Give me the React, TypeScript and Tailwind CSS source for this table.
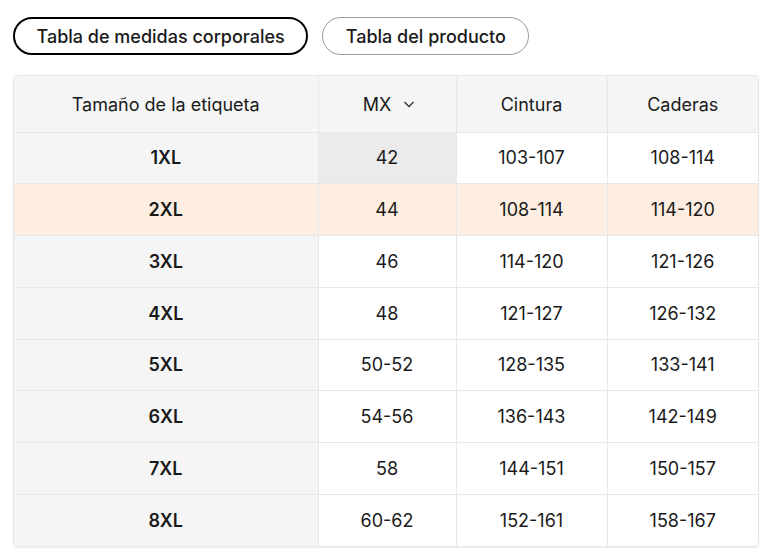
const rows = [
  { label: "1XL", mx: "42", waist: "103-107", hips: "108-114" },
  { label: "2XL", mx: "44", waist: "108-114", hips: "114-120" },
  { label: "3XL", mx: "46", waist: "114-120", hips: "121-126" },
  { label: "4XL", mx: "48", waist: "121-127", hips: "126-132" },
  { label: "5XL", mx: "50-52", waist: "128-135", hips: "133-141" },
  { label: "6XL", mx: "54-56", waist: "136-143", hips: "142-149" },
  { label: "7XL", mx: "58", waist: "144-151", hips: "150-157" },
  { label: "8XL", mx: "60-62", waist: "152-161", hips: "158-167" },
];

export default function App() {
  return (
    <div className="min-h-[558px] bg-white px-[13px] pt-[17px] font-['Inter',sans-serif] text-[18px] text-[#1a1a1a]">
      <div className="flex items-center gap-[14px]">
        <button
          type="button"
          className="h-[38px] rounded-full border-2 border-black px-[21.5px] font-medium"
        >
          Tabla de medidas corporales
        </button>
        <button
          type="button"
          className="h-[38px] rounded-full border border-[#9a9a9a] px-[22.5px] font-medium"
        >
          Tabla del producto
        </button>
      </div>

      <div className="mt-[20px] w-[746px] overflow-hidden rounded-[4px] border border-[#e6e6e6] shadow-[0_1px_2px_rgba(0,0,0,0.08)]">
        <table className="w-full border-collapse text-center">
          <colgroup>
            <col className="w-[304px]" />
            <col className="w-[138px]" />
            <col className="w-[151px]" />
            <col />
          </colgroup>
          <thead>
            <tr className="h-[56px] bg-[#f5f5f5]">
              <th className="border-r border-[#e8e8e8] pt-[1px] font-normal">Tamaño de la etiqueta</th>
              <th className="border-r border-[#e8e8e8] pt-[1px] font-normal">
                <span className="inline-flex items-center gap-[12px] pl-[4px]">
                  MX
                  <svg width="12" height="12" viewBox="0 0 12 12" fill="none" stroke="#333" strokeWidth="1.3">
                    <path d="M1.5 4 6 8.5 10.5 4" />
                  </svg>
                </span>
              </th>
              <th className="border-r border-[#e8e8e8] pt-[1px] font-normal">Cintura</th>
              <th className="pt-[1px] font-normal">Caderas</th>
            </tr>
          </thead>
          <tbody>
            {rows.map((r, i) => {
              const hl = i === 1;
              return (
                <tr key={r.label} className={`h-[51.75px] border-t border-[#e8e8e8] ${hl ? "bg-[#fdeee1]" : ""}`}>
                  <td className={`border-r border-[#e8e8e8] font-semibold ${hl ? "" : "bg-[#f5f5f5]"}`}>{r.label}</td>
                  <td className={`border-r border-[#e8e8e8] ${i === 0 ? "bg-[#ebebeb]" : ""}`}>{r.mx}</td>
                  <td className="border-r border-[#e8e8e8]">{r.waist}</td>
                  <td>{r.hips}</td>
                </tr>
              );
            })}
          </tbody>
        </table>
      </div>
    </div>
  );
}
